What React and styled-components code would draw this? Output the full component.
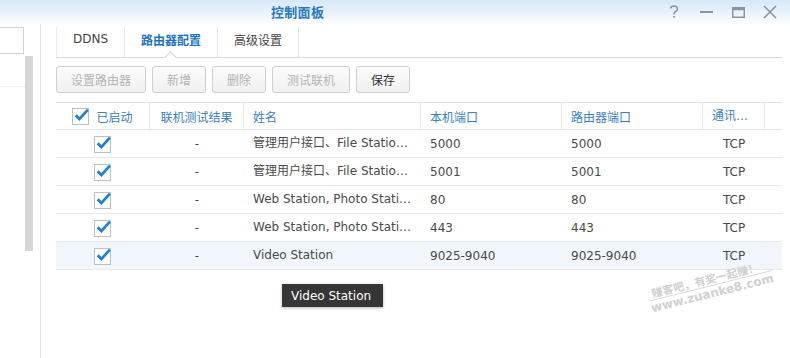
import React from "react";
import styled, { createGlobalStyle, css } from "styled-components";

const GlobalStyle = createGlobalStyle`
  html, body { margin: 0; padding: 0; background: #fff; }
  body { font-family: "DejaVu Sans", "Noto Sans CJK SC", sans-serif; }
  * { box-sizing: border-box; }
`;

const FONT = `"DejaVu Sans", "Noto Sans CJK SC", sans-serif`;

const Window = styled.div`
  position: relative;
  width: 790px;
  height: 358px;
  overflow: hidden;
  background: #fff;
  font-family: ${FONT};
  font-size: 12px;
  color: #444;
`;

const TitleBar = styled.div`
  height: 24px;
  display: flex;
  align-items: center;
  background: linear-gradient(to bottom, #d6e8f8 0%, #eaf3fc 55%, #fbfdff 100%);
`;

const Title = styled.div`
  margin-left: 271px;
  font-family: "Noto Sans CJK SC", sans-serif;
  font-weight: 700;
  font-size: 13px;
  color: #2a78c2;
  letter-spacing: 0.3px;
  line-height: 20px;
`;

const Controls = styled.div`
  margin-left: auto;
  margin-right: 4px;
  display: flex;
  align-items: center;
`;

const Ctrl = styled.div`
  width: 32px;
  height: 22px;
  display: flex;
  align-items: center;
  justify-content: center;
  color: #8796a6;
`;

const Body = styled.div`
  display: flex;
  height: 334px;
`;

const Sidebar = styled.div`
  width: 41px;
  flex: none;
  border-right: 1px solid #e2e2e2;
  padding-top: 3px;
  display: flex;
  flex-direction: column;
`;

const SearchBox = styled.div`
  width: 24px;
  height: 27px;
  border: 1px solid #d2d2d2;
  border-left: none;
  background: #fff;
`;

const ListArea = styled.div`
  display: flex;
  margin-top: 1px;
`;

const List = styled.div`
  width: 25px;
  display: flex;
  flex-direction: column;
`;

const ListItem = styled.div`
  height: 32px;
  border-bottom: 1px solid #ededed;
`;

const ScrollBar = styled.div`
  width: 8px;
  height: 195px;
  margin-top: 1px;
  background: #d6d6d6;
`;

const Main = styled.div`
  margin-left: 15px;
  width: 726px;
  display: flex;
  flex-direction: column;
`;

const TabBar = styled.div`
  display: flex;
  border-bottom: 1px solid #dadada;
  height: 34px;
`;

const Tab = styled.div`
  position: relative;
  margin-top: 3px;
  height: 30px;
  padding: 0 16px 6px;
  display: flex;
  align-items: center;
  border-right: 1px solid #e6e6e6;
  ${(p) => p.$first && css`border-left: 1px solid #ececec;`}
  font-size: 12px;
  color: ${(p) => (p.$active ? "#1e73c0" : "#444")};
  font-weight: ${(p) => (p.$active ? 700 : 400)};
  ${(p) =>
    p.$active &&
    css`
      &::after {
        content: "";
        position: absolute;
        left: 50%;
        bottom: -5px;
        width: 8px;
        height: 8px;
        margin-left: -5px;
        background: #fff;
        border-left: 1px solid #cfcfcf;
        border-top: 1px solid #cfcfcf;
        transform: rotate(45deg);
      }
    `}
`;

const Toolbar = styled.div`
  display: flex;
  gap: 6px;
  margin-top: 8px;
`;

const Button = styled.button`
  height: 27px;
  padding: 0 14px;
  border: 1px solid #cfcfcf;
  border-radius: 3px;
  background: linear-gradient(to bottom, #fcfcfc, #f0f0f0);
  font-family: ${FONT};
  font-size: 12px;
  color: ${(p) => (p.disabled ? "#b4b4b4" : "#333")};
  cursor: default;
`;

const Table = styled.div`
  margin-top: 9px;
  display: flex;
  flex-direction: column;
`;

const COLS = "94px 94px 177px 141px 141px 62px 1fr";

const HeaderRow = styled.div`
  display: grid;
  grid-template-columns: ${COLS};
  height: 28px;
  border-top: 1px solid #e2e2e2;
  border-bottom: 1px solid #e4e4e4;
`;

const HeadCell = styled.div`
  display: flex;
  align-items: center;
  justify-content: ${(p) => (p.$center ? "center" : "flex-start")};
  gap: 6px;
  padding: 0 9px;
  min-width: 0;
  border-right: ${(p) => (p.$last ? "none" : "1px solid #e6e6e6")};
  color: #3a80c2;
  font-size: 12px;
  white-space: nowrap;
  overflow: hidden;
  ${(p) =>
    p.$ellipsis &&
    css`
      display: block;
      line-height: 26px;
      text-overflow: ellipsis;
    `}
`;

const Row = styled.div`
  display: grid;
  grid-template-columns: ${COLS};
  height: 28px;
  border-bottom: 1px solid #e9e9e9;
  background: ${(p) => (p.$selected ? "#f0f6fc" : "#fff")};
`;

const Cell = styled.div`
  display: flex;
  align-items: center;
  justify-content: ${(p) => (p.$center ? "center" : "flex-start")};
  padding: 0 9px;
  min-width: 0;
  color: #4a4a4a;
  font-size: 12px;
  white-space: nowrap;
  overflow: hidden;
  ${(p) =>
    p.$ellipsis &&
    css`
      display: block;
      line-height: 27px;
      text-overflow: ellipsis;
    `}
`;

const Tooltip = styled.div`
  position: absolute;
  left: 282px;
  top: 284px;
  width: 101px;
  height: 23px;
  padding-left: 9px;
  display: flex;
  align-items: center;
  background: #363636;
  color: #fff;
  font-size: 12px;
  box-shadow: 0 1px 3px rgba(0, 0, 0, 0.3);
`;

const Watermark = styled.div`
  position: absolute;
  left: 646px;
  top: 287px;
  transform: rotate(-14deg);
  transform-origin: left top;
  display: flex;
  flex-direction: column;
  color: #d0d0d0;
  pointer-events: none;
`;

const WmLine1 = styled.div`
  font-family: "Noto Sans CJK SC", sans-serif;
  font-size: 11px;
  font-weight: 700;
  padding-left: 4px;
  line-height: 14px;
  border-bottom: 1px solid #dadada;
`;

const WmLine2 = styled.div`
  font-family: "DejaVu Sans", sans-serif;
  font-size: 12px;
  font-weight: 700;
  line-height: 15px;
`;

const Check = () => (
  <svg width="18" height="18" viewBox="0 0 18 18">
    <rect x="0.5" y="1.5" width="16" height="16" fill="#fff" stroke="#b9c0c7" />
    <path
      d="M2.6 9.2 L4.9 7.2 L7.3 10 L15 1.8 L16.8 3.7 L7.4 13.9 Z"
      fill="#1f80d0"
    />
  </svg>
);

const rows = [
  { name: "管理用户接口、File Station, Audio Station", local: "5000", router: "5000" },
  { name: "管理用户接口、File Station, Audio Station", local: "5001", router: "5001" },
  { name: "Web Station, Photo Station", local: "80", router: "80" },
  { name: "Web Station, Photo Station", local: "443", router: "443" },
  { name: "Video Station", local: "9025-9040", router: "9025-9040", selected: true },
];

export default function App() {
  return (
    <>
      <GlobalStyle />
      <Window>
        <TitleBar>
          <Title>控制面板</Title>
          <Controls>
            <Ctrl>
              <svg width="10" height="14" viewBox="0 0 10 14">
                <path d="M1.5 3.5 Q2 1 5 1 Q8.5 1 8.5 4 Q8.5 6 6 7 Q5 7.5 5 9.5" fill="none" stroke="currentColor" strokeWidth="1.6" />
                <rect x="4.2" y="11" width="1.7" height="1.7" fill="currentColor" />
              </svg>
            </Ctrl>
            <Ctrl>
              <svg width="13" height="4" viewBox="0 0 13 4">
                <rect x="0" y="1" width="13" height="2" fill="currentColor" />
              </svg>
            </Ctrl>
            <Ctrl>
              <svg width="13" height="11" viewBox="0 0 13 11">
                <rect x="0.75" y="0.75" width="11.5" height="9.5" fill="none" stroke="currentColor" strokeWidth="1.5" />
                <rect x="0.75" y="0.75" width="11.5" height="2.5" fill="currentColor" />
              </svg>
            </Ctrl>
            <Ctrl>
              <svg width="14" height="14" viewBox="0 0 14 14">
                <path d="M1 1 L13 13 M13 1 L1 13" stroke="currentColor" strokeWidth="1.6" />
              </svg>
            </Ctrl>
          </Controls>
        </TitleBar>
        <Body>
          <Sidebar>
            <SearchBox />
            <ListArea>
              <List>
                <ListItem />
              </List>
              <ScrollBar />
            </ListArea>
          </Sidebar>
          <Main>
            <TabBar>
              <Tab $first>DDNS</Tab>
              <Tab $active>路由器配置</Tab>
              <Tab>高级设置</Tab>
            </TabBar>
            <Toolbar>
              <Button disabled>设置路由器</Button>
              <Button disabled>新增</Button>
              <Button disabled>删除</Button>
              <Button disabled>测试联机</Button>
              <Button>保存</Button>
            </Toolbar>
            <Table>
              <HeaderRow>
                <HeadCell $center>
                  <Check />
                  <span>已启动</span>
                </HeadCell>
                <HeadCell $center>联机测试结果</HeadCell>
                <HeadCell>姓名</HeadCell>
                <HeadCell>本机端口</HeadCell>
                <HeadCell>路由器端口</HeadCell>
                <HeadCell $ellipsis>通讯协议</HeadCell>
                <HeadCell $last />
              </HeaderRow>
              {rows.map((r, i) => (
                <Row key={i} $selected={r.selected}>
                  <Cell $center>
                    <Check />
                  </Cell>
                  <Cell $center>-</Cell>
                  <Cell $ellipsis>{r.name}</Cell>
                  <Cell>{r.local}</Cell>
                  <Cell>{r.router}</Cell>
                  <Cell $center>TCP</Cell>
                  <Cell />
                </Row>
              ))}
            </Table>
          </Main>
        </Body>
        <Tooltip>Video Station</Tooltip>
        <Watermark>
          <WmLine1>赚客吧，有奖一起赚！</WmLine1>
          <WmLine2>www.zuanke8.com</WmLine2>
        </Watermark>
      </Window>
    </>
  );
}
